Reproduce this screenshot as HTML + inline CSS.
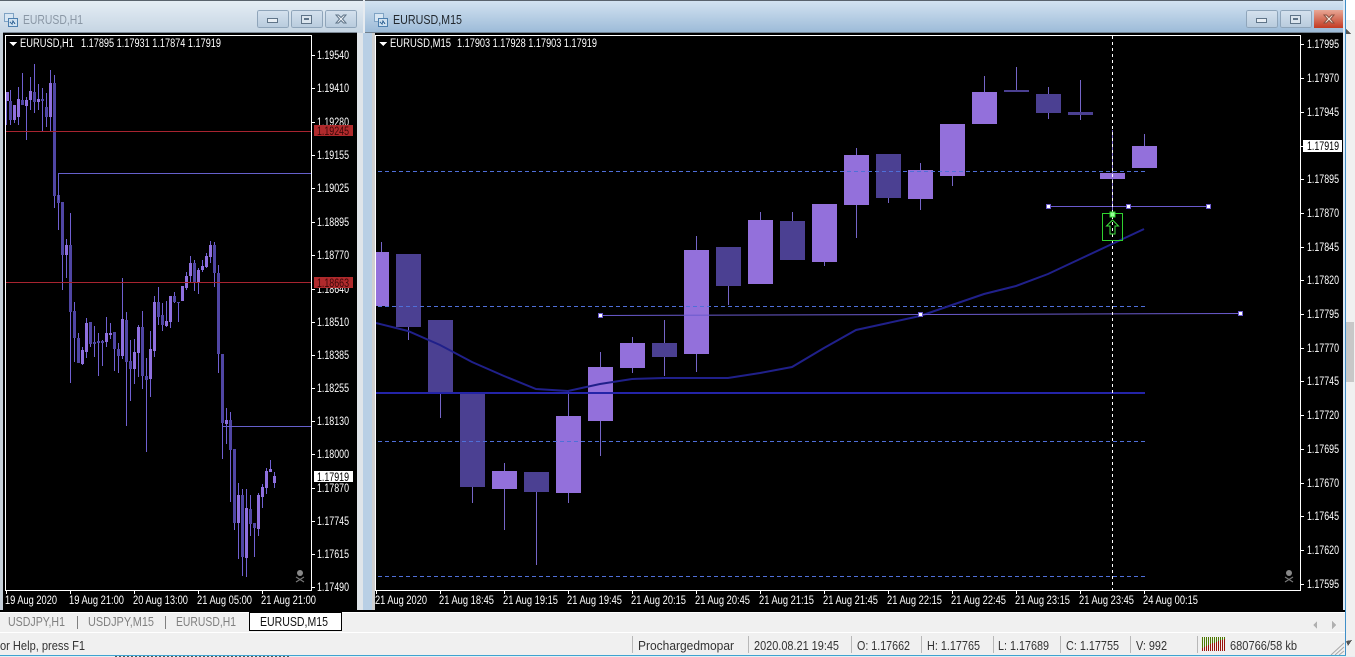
<!DOCTYPE html>
<html><head><meta charset="utf-8"><style>
html,body{margin:0;padding:0;background:#f0f0f0;width:1355px;height:657px;overflow:hidden}
svg{display:block;position:absolute;left:0;top:0}
text{font-family:"Liberation Sans",sans-serif;white-space:pre}
.p text,.t text{fill:#fff;font-size:11.5px}
.b text{fill:#333;font-size:13px}
</style></head><body>
<svg width="1355" height="657" viewBox="0 0 1355 657" xmlns="http://www.w3.org/2000/svg" shape-rendering="crispEdges">
<defs>
<linearGradient id="g1" x1="0" y1="0" x2="0" y2="1"><stop offset="0" stop-color="#e6eef5"/><stop offset="1" stop-color="#c6d5e3"/></linearGradient>
<linearGradient id="g2" x1="0" y1="0" x2="0" y2="1"><stop offset="0" stop-color="#d4e4f2"/><stop offset="1" stop-color="#9dbbd8"/></linearGradient>
<linearGradient id="bt" x1="0" y1="0" x2="0" y2="1"><stop offset="0" stop-color="#d5e2ee"/><stop offset="1" stop-color="#b8cbdd"/></linearGradient>
<linearGradient id="btr" x1="0" y1="0" x2="0" y2="1"><stop offset="0" stop-color="#e8a795"/><stop offset="1" stop-color="#c23a22"/></linearGradient>
</defs>
<rect width="1355" height="657" fill="#f0f0f0"/>
<rect x="1346" y="0" width="9" height="20" fill="#fff"/>
<rect x="1346" y="322" width="8" height="60" fill="#c8c8c8"/>

<!-- left window -->
<rect x="0" y="0" width="363" height="612" fill="#c8d5e2"/>
<rect x="0" y="0" width="363" height="32" fill="url(#g1)"/>
<rect x="0" y="0" width="363" height="1" fill="#59636d"/>
<rect x="3" y="32" width="354" height="1" fill="#7b8794"/>
<rect x="3" y="33" width="354" height="578" fill="#000"/>
<rect x="0" y="33" width="3" height="578" fill="#c5cfd9"/>
<rect x="357" y="33" width="6" height="578" fill="#e0e5ea"/>
<!-- icon -->
<g>
<rect x="4.5" y="13.5" width="9" height="8" fill="#d7e6f3" stroke="#7fa3c4"/>
<rect x="8.5" y="18.5" width="9" height="8" fill="#cfe1f0" stroke="#4d7fae"/>
<path d="M10 22l2 2 1-3 2 3" stroke="#3b6b9a" fill="none"/>
</g>
<text x="23" y="24" font-size="13" fill="#8a97a5" textLength="60" lengthAdjust="spacingAndGlyphs">EURUSD,H1</text>
<g stroke="#8fa5ba" fill="url(#bt)">
<rect x="257.5" y="10.5" width="31" height="17" rx="2"/>
<rect x="291.5" y="10.5" width="31" height="17" rx="2"/>
<rect x="325.5" y="10.5" width="31" height="17" rx="2"/>
</g>
<rect x="267.5" y="18.5" width="10" height="4" fill="#e8eef4" stroke="#5f7488"/>
<rect x="301.5" y="15.5" width="10" height="8" fill="#dbe5ee" stroke="#5f7488"/>
<rect x="304" y="18" width="5" height="2" fill="#5f7488"/>
<path d="M336 15l2.500 0 2.500 2.500 2.500-2.500 2.500 0-3.500 4 3.500 4-2.500 0-2.500-2.500-2.500 2.500-2.500 0 3.500-4z" fill="#eef2f6" stroke="#5f7488" shape-rendering="auto"/>

<!-- right window -->
<rect x="363" y="0" width="982" height="612" fill="#bcd0e4"/>
<rect x="363" y="0" width="2" height="33" fill="#e6ebf0"/>
<rect x="365" y="0" width="980" height="32" fill="url(#g2)"/>
<rect x="365" y="0" width="980" height="1" fill="#59636d"/>
<rect x="365" y="32" width="978" height="1" fill="#6f7f8e"/>
<rect x="375" y="33" width="968" height="578" fill="#000"/>
<rect x="363" y="33" width="9" height="578" fill="#b9cfe5"/>
<rect x="372" y="33" width="3" height="578" fill="#cfcfcf"/>
<rect x="1345" y="0" width="1" height="655" fill="#3f8fc8"/>
<rect x="1343" y="0" width="2" height="612" fill="#dfeaf5"/>
<g>
<rect x="374.5" y="13.5" width="9" height="8" fill="#d7e6f3" stroke="#7fa3c4"/>
<rect x="378.5" y="18.5" width="9" height="8" fill="#cfe1f0" stroke="#4d7fae"/>
<path d="M380 22l2 2 1-3 2 3" stroke="#3b6b9a" fill="none"/>
</g>
<text x="393" y="24" font-size="13" fill="#22282e" textLength="69" lengthAdjust="spacingAndGlyphs">EURUSD,M15</text>
<g stroke="#8fa5ba" fill="url(#bt)">
<rect x="1246.5" y="10.5" width="31" height="17" rx="2"/>
<rect x="1280.5" y="10.5" width="31" height="17" rx="2"/>
</g>
<rect x="1314" y="10" width="29" height="18" fill="url(#btr)"/>
<rect x="1256.5" y="18.5" width="10" height="4" fill="#e8eef4" stroke="#5f7488"/>
<rect x="1290.5" y="15.5" width="10" height="8" fill="#dbe5ee" stroke="#5f7488"/>
<rect x="1293" y="18" width="5" height="2" fill="#5f7488"/>
<path d="M1324 15l2.500 0 2.500 2.500 2.500-2.500 2.500 0-3.500 4 3.500 4-2.500 0-2.500-2.500-2.500 2.500-2.500 0 3.500-4z" fill="#f3e6dc" stroke="#8a5040" shape-rendering="auto"/>

<!-- H1 chart -->
<g fill="none">
<path stroke="#7060d2" d="M6.5 92V125M10.5 90V125M14.5 105V123M18.5 87V125M22.5 73V105M26.5 97V140M30.5 77V110M34.5 64V113M38.5 84V110M42.5 88V131M46.5 93V127M50.5 70V131M54.5 75V208M58.5 173V230M62.5 202V290M66.5 239V278M70.5 213V383M74.5 302V362M78.5 333V363M82.5 347V365M86.5 318V358M90.5 322V347M94.5 326V357M98.5 333V376M102.5 340V366M106.5 317V347M110.5 323V339M114.5 332V371M118.5 343V373M122.5 278V359M126.5 312V426M130.5 340V401M134.5 339V384M138.5 325V377M142.5 311V389M146.5 358V452M150.5 331V397M154.5 296V357M158.5 287V325M162.5 303V331M166.5 301V327M170.5 296V328M174.5 292V303M178.5 302V322M182.5 286V301M186.5 272V290M190.5 256V282M194.5 260V291M198.5 268V294M202.5 260V272M206.5 253V268M210.5 241V263M214.5 242V287M218.5 265V373M222.5 354V459M226.5 408V444M230.5 412V502M234.5 449V530M238.5 483V559M242.5 489V576M246.5 489V577M250.5 495V536M254.5 523V557M258.5 493V536M262.5 484V508M266.5 468V494M270.5 460V472M274.5 472V488"/>
<path stroke="#5046a4" stroke-width="3" d="M10.5 101V120M22.5 100V105M34.5 92V102M42.5 99V101M46.5 107V117M54.5 83V196M58.5 195V203M62.5 202V255M70.5 245V312M74.5 311V338M78.5 338V363M90.5 322V344M94.5 342V344M98.5 341V343M102.5 341V343M114.5 332V349M118.5 349V356M126.5 320V362M130.5 361V369M142.5 327V376M146.5 376V380M158.5 302V317M162.5 315V325M174.5 296V302M178.5 302V303M194.5 263V282M214.5 245V273M218.5 273V354M222.5 354V423M230.5 420V450M234.5 449V523M242.5 495V557M250.5 509V524M254.5 523V528"/>
<path stroke="#8f70de" stroke-width="3" d="M7.5 92V101M14.5 105V120M18.5 99V117M26.5 100V106M30.5 91V100M38.5 99V102M50.5 83V117M66.5 245V255M82.5 350V364M86.5 323V352M106.5 333V342M110.5 333V335M122.5 319V356M134.5 352V369M138.5 327V353M150.5 349V379M154.5 302V351M166.5 321V326M170.5 296V322M182.5 286V301M186.5 276V288M190.5 263V276M198.5 270V283M202.5 266V270M206.5 256V267M210.5 245V257M226.5 420V424M238.5 495V523M246.5 508V558M258.5 495V529M262.5 487V497M266.5 471V488M270.5 469V472M274.5 476V483"/>
<path stroke="#a82430" d="M6 131.5H312M6 282.5H312"/>
<path stroke="#6660cc" d="M58.5 173.5H312M58.5 173.5V200M222 426.5H312"/>
<rect x="5.5" y="35.5" width="306" height="555" stroke="#fff"/>
<path stroke="#fff" d="M312 55.5h3M312 88.5h3M312 122.5h3M312 155.5h3M312 188.5h3M312 222.5h3M312 255.5h3M312 289.5h3M312 322.5h3M312 355.5h3M312 388.5h3M312 421.5h3M312 454.5h3M312 488.5h3M312 521.5h3M312 554.5h3M312 587.5h3M6.5 591v3M70.5 591v3M134.5 591v3M198.5 591v3M262.5 591v3"/>
</g>
<path d="M9 42h8l-4 4z" fill="#fff"/>
<text x="20" y="47" fill="#fff" font-size="11.5" textLength="54" lengthAdjust="spacingAndGlyphs">EURUSD,H1</text>
<text x="81" y="47" fill="#fff" font-size="11.5" textLength="140" lengthAdjust="spacingAndGlyphs">1.17895 1.17931 1.17874 1.17919</text>
<g class="p">
<text x="317" y="59" textLength="32" lengthAdjust="spacingAndGlyphs">1.19540</text>
<text x="317" y="92" textLength="32" lengthAdjust="spacingAndGlyphs">1.19410</text>
<text x="317" y="126" textLength="32" lengthAdjust="spacingAndGlyphs">1.19280</text>
<text x="317" y="159" textLength="32" lengthAdjust="spacingAndGlyphs">1.19155</text>
<text x="317" y="192" textLength="32" lengthAdjust="spacingAndGlyphs">1.19025</text>
<text x="317" y="226" textLength="32" lengthAdjust="spacingAndGlyphs">1.18895</text>
<text x="317" y="259" textLength="32" lengthAdjust="spacingAndGlyphs">1.18770</text>
<text x="317" y="293" textLength="32" lengthAdjust="spacingAndGlyphs">1.18640</text>
<text x="317" y="326" textLength="32" lengthAdjust="spacingAndGlyphs">1.18510</text>
<text x="317" y="359" textLength="32" lengthAdjust="spacingAndGlyphs">1.18385</text>
<text x="317" y="392" textLength="32" lengthAdjust="spacingAndGlyphs">1.18255</text>
<text x="317" y="425" textLength="32" lengthAdjust="spacingAndGlyphs">1.18130</text>
<text x="317" y="458" textLength="32" lengthAdjust="spacingAndGlyphs">1.18000</text>
<text x="317" y="492" textLength="32" lengthAdjust="spacingAndGlyphs">1.17870</text>
<text x="317" y="525" textLength="32" lengthAdjust="spacingAndGlyphs">1.17745</text>
<text x="317" y="558" textLength="32" lengthAdjust="spacingAndGlyphs">1.17615</text>
<text x="317" y="591" textLength="32" lengthAdjust="spacingAndGlyphs">1.17490</text>
</g>
<rect x="314" y="125" width="39" height="11" fill="#b02a2c"/>
<text x="317" y="135" font-size="11.5" fill="#3a0808" textLength="32" lengthAdjust="spacingAndGlyphs">1.19245</text>
<rect x="314" y="277" width="39" height="11" fill="#b02a2c"/>
<text x="317" y="287" font-size="11.5" fill="#3a0808" textLength="32" lengthAdjust="spacingAndGlyphs">1.18663</text>
<rect x="314" y="471" width="39" height="11" fill="#fff"/>
<text x="317" y="481" font-size="11.5" fill="#000" textLength="32" lengthAdjust="spacingAndGlyphs">1.17919</text>
<g class="t">
<text x="5" y="604" textLength="52" lengthAdjust="spacingAndGlyphs">19 Aug 2020</text>
<text x="69" y="604" textLength="55" lengthAdjust="spacingAndGlyphs">19 Aug 21:00</text>
<text x="133" y="604" textLength="55" lengthAdjust="spacingAndGlyphs">20 Aug 13:00</text>
<text x="197" y="604" textLength="55" lengthAdjust="spacingAndGlyphs">21 Aug 05:00</text>
<text x="261" y="604" textLength="55" lengthAdjust="spacingAndGlyphs">21 Aug 21:00</text>
</g>
<g shape-rendering="auto" stroke="#777" fill="none">
<circle cx="300" cy="573" r="3" fill="#888" stroke="none"/>
<path d="M296 577l8 5M304 577l-8 5" stroke-width="1.2"/>
</g>

<!-- M15 chart -->
<g fill="none">
<path stroke="#7565c8" d="M381.5 242V252M408.5 254V340M440.5 320V418M472.5 393V503M504.5 463V530M536.5 472V565M568.5 390V503M600.5 352V456M632.5 337V373M664.5 320V376M696.5 236V372M728.5 247V305M760.5 212V283M792.5 212V260M824.5 204V266M856.5 148V238M888.5 154V203M920.5 163V210M952.5 124V186M984.5 76V124M1016.5 67V91M1048.5 87V119M1080.5 80V120M1112.5 130V213M1144.5 134V146"/>
<g stroke="none" fill="#4b4092">
<rect x="396" y="254" width="25" height="73"/>
<rect x="428" y="320" width="25" height="72"/>
<rect x="460" y="393" width="25" height="94"/>
<rect x="524" y="472" width="25" height="20"/>
<rect x="652" y="343" width="25" height="14"/>
<rect x="716" y="247" width="25" height="39"/>
<rect x="780" y="221" width="25" height="39"/>
<rect x="876" y="154" width="25" height="44"/>
<rect x="1004" y="90" width="25" height="2"/>
<rect x="1036" y="94" width="25" height="19"/>
<rect x="1068" y="112" width="25" height="3"/>
</g>
<g stroke="none" fill="#9370db">
<rect x="376" y="252" width="13" height="54"/>
<rect x="492" y="471" width="25" height="18"/>
<rect x="556" y="416" width="25" height="77"/>
<rect x="588" y="367" width="25" height="54"/>
<rect x="620" y="343" width="25" height="25"/>
<rect x="684" y="250" width="25" height="104"/>
<rect x="748" y="220" width="25" height="64"/>
<rect x="812" y="204" width="25" height="58"/>
<rect x="844" y="155" width="25" height="50"/>
<rect x="908" y="170" width="25" height="29"/>
<rect x="940" y="124" width="25" height="52"/>
<rect x="972" y="92" width="25" height="32"/>
<rect x="1100" y="173" width="25" height="6"/>
<rect x="1132" y="146" width="25" height="22"/>
</g>
<path stroke="#4f6fd8" stroke-dasharray="4 3" d="M378 171.5H1146M378 306.5H1146M378 441.5H1146M378 576.5H1146"/>
<path stroke="#2424a8" stroke-width="2" d="M376 393H1145"/>
<path stroke="#20208a" stroke-width="2" shape-rendering="auto" d="M376 323L408 331 440 345 472 362 504 376 536 389 568 391 600 384 632 379 664 378 696 378 728 378 760 373 792 367 824 348 856 330 888 323 920 316 952 305 984 294 1016 286 1048 274 1080 259 1112 244 1144 229"/>
<path stroke="#6a5acd" shape-rendering="auto" d="M600 315.5L1240 313.5"/>
<path stroke="#6a5acd" d="M1048 206.5H1208"/>
<path stroke="#fff" stroke-dasharray="3 3" d="M1112.5 36V590"/>
<rect x="1102.5" y="213.5" width="20" height="27" stroke="#2fd12f"/>
<path stroke="#3fe03f" shape-rendering="auto" d="M1112.5 220l-6 6h3.5v8h5v-8h3.5z"/>
<rect x="375.5" y="35.5" width="925" height="555" stroke="#fff"/>
<path stroke="#fff" d="M1301 44.5h3M1301 78.5h3M1301 112.5h3M1301 146.5h3M1301 179.5h3M1301 213.5h3M1301 247.5h3M1301 280.5h3M1301 314.5h3M1301 348.5h3M1301 381.5h3M1301 415.5h3M1301 449.5h3M1301 483.5h3M1301 516.5h3M1301 550.5h3M1301 584.5h3M376.5 591v3M440.5 591v3M504.5 591v3M568.5 591v3M632.5 591v3M696.5 591v3M760.5 591v3M824.5 591v3M888.5 591v3M952.5 591v3M1016.5 591v3M1080.5 591v3M1144.5 591v3"/>
</g>
<g fill="#fff" stroke="#6a5acd">
<rect x="598.5" y="313.5" width="4" height="4"/>
<rect x="918.5" y="312.5" width="4" height="4"/>
<rect x="1238.5" y="311.5" width="4" height="4"/>
<rect x="1046.5" y="204.5" width="4" height="4"/>
<rect x="1126.5" y="204.5" width="4" height="4"/>
<rect x="1206.5" y="204.5" width="4" height="4"/>
</g>
<rect x="1110" y="212" width="5" height="5" fill="#9f9" stroke="#2fd12f"/>
<path d="M379 42h8l-4 4z" fill="#fff"/>
<text x="390" y="47" fill="#fff" font-size="11.5" textLength="61" lengthAdjust="spacingAndGlyphs">EURUSD,M15</text>
<text x="457" y="47" fill="#fff" font-size="11.5" textLength="140" lengthAdjust="spacingAndGlyphs">1.17903 1.17928 1.17903 1.17919</text>
<g class="p">
<text x="1307" y="48" textLength="32" lengthAdjust="spacingAndGlyphs">1.17995</text>
<text x="1307" y="82" textLength="32" lengthAdjust="spacingAndGlyphs">1.17970</text>
<text x="1307" y="116" textLength="32" lengthAdjust="spacingAndGlyphs">1.17945</text>
<text x="1307" y="183" textLength="32" lengthAdjust="spacingAndGlyphs">1.17895</text>
<text x="1307" y="217" textLength="32" lengthAdjust="spacingAndGlyphs">1.17870</text>
<text x="1307" y="251" textLength="32" lengthAdjust="spacingAndGlyphs">1.17845</text>
<text x="1307" y="284" textLength="32" lengthAdjust="spacingAndGlyphs">1.17820</text>
<text x="1307" y="318" textLength="32" lengthAdjust="spacingAndGlyphs">1.17795</text>
<text x="1307" y="352" textLength="32" lengthAdjust="spacingAndGlyphs">1.17770</text>
<text x="1307" y="385" textLength="32" lengthAdjust="spacingAndGlyphs">1.17745</text>
<text x="1307" y="419" textLength="32" lengthAdjust="spacingAndGlyphs">1.17720</text>
<text x="1307" y="453" textLength="32" lengthAdjust="spacingAndGlyphs">1.17695</text>
<text x="1307" y="487" textLength="32" lengthAdjust="spacingAndGlyphs">1.17670</text>
<text x="1307" y="520" textLength="32" lengthAdjust="spacingAndGlyphs">1.17645</text>
<text x="1307" y="554" textLength="32" lengthAdjust="spacingAndGlyphs">1.17620</text>
<text x="1307" y="588" textLength="32" lengthAdjust="spacingAndGlyphs">1.17595</text>
</g>
<rect x="1303" y="140" width="39" height="12" fill="#fff"/>
<text x="1307" y="150" font-size="11.5" fill="#000" textLength="32" lengthAdjust="spacingAndGlyphs">1.17919</text>
<g class="t">
<text x="375" y="604" textLength="52" lengthAdjust="spacingAndGlyphs">21 Aug 2020</text>
<text x="439" y="604" textLength="55" lengthAdjust="spacingAndGlyphs">21 Aug 18:45</text>
<text x="503" y="604" textLength="55" lengthAdjust="spacingAndGlyphs">21 Aug 19:15</text>
<text x="567" y="604" textLength="55" lengthAdjust="spacingAndGlyphs">21 Aug 19:45</text>
<text x="631" y="604" textLength="55" lengthAdjust="spacingAndGlyphs">21 Aug 20:15</text>
<text x="695" y="604" textLength="55" lengthAdjust="spacingAndGlyphs">21 Aug 20:45</text>
<text x="759" y="604" textLength="55" lengthAdjust="spacingAndGlyphs">21 Aug 21:15</text>
<text x="823" y="604" textLength="55" lengthAdjust="spacingAndGlyphs">21 Aug 21:45</text>
<text x="887" y="604" textLength="55" lengthAdjust="spacingAndGlyphs">21 Aug 22:15</text>
<text x="951" y="604" textLength="55" lengthAdjust="spacingAndGlyphs">21 Aug 22:45</text>
<text x="1015" y="604" textLength="55" lengthAdjust="spacingAndGlyphs">21 Aug 23:15</text>
<text x="1079" y="604" textLength="55" lengthAdjust="spacingAndGlyphs">21 Aug 23:45</text>
<text x="1143" y="604" textLength="55" lengthAdjust="spacingAndGlyphs">24 Aug 00:15</text>
</g>
<g shape-rendering="auto" stroke="#777" fill="none">
<circle cx="1289" cy="573" r="3" fill="#888" stroke="none"/>
<path d="M1285 577l8 5M1293 577l-8 5" stroke-width="1.2"/>
</g>

<!-- tabs -->
<rect x="0" y="610" width="1345" height="2" fill="#000"/>
<rect x="0" y="612" width="1345" height="1" fill="#fff"/>
<rect x="249.500" y="611.500" width="92" height="19" fill="#fff" stroke="#000"/>
<rect x="250" y="611" width="91" height="2" fill="#000"/>
<g font-size="13">
<text x="8" y="626" fill="#808080" textLength="57" lengthAdjust="spacingAndGlyphs">USDJPY,H1</text>
<text x="88" y="626" fill="#808080" textLength="66" lengthAdjust="spacingAndGlyphs">USDJPY,M15</text>
<text x="176" y="626" fill="#808080" textLength="60" lengthAdjust="spacingAndGlyphs">EURUSD,H1</text>
<text x="260" y="626" fill="#111" textLength="68" lengthAdjust="spacingAndGlyphs">EURUSD,M15</text>
</g>
<path d="M77.500 616V629M165.500 616V629" stroke="#808080"/>
<path d="M1317 621l-4 4 4 4zM1332 621l4 4-4 4z" fill="#b0b0b0"/>

<!-- status -->
<rect x="0" y="632" width="1345" height="1" fill="#fff"/>
<path d="M632.500 636V653M748.500 636V653M851.500 636V653M921.500 636V653M993.500 636V653M1060.500 636V653M1130.500 636V653M1197.500 636V653" stroke="#b8b8b8"/>
<g class="b">
<text x="0" y="650" textLength="85" lengthAdjust="spacingAndGlyphs">or Help, press F1</text>
<text x="638" y="650" textLength="96" lengthAdjust="spacingAndGlyphs">Prochargedmopar</text>
<text x="754" y="650" textLength="85" lengthAdjust="spacingAndGlyphs">2020.08.21 19:45</text>
<text x="857" y="650" textLength="53" lengthAdjust="spacingAndGlyphs">O: 1.17662</text>
<text x="927" y="650" textLength="53" lengthAdjust="spacingAndGlyphs">H: 1.17765</text>
<text x="998" y="650" textLength="51" lengthAdjust="spacingAndGlyphs">L: 1.17689</text>
<text x="1066" y="650" textLength="53" lengthAdjust="spacingAndGlyphs">C: 1.17755</text>
<text x="1136" y="650" textLength="31" lengthAdjust="spacingAndGlyphs">V: 992</text>
<text x="1230" y="650" textLength="67" lengthAdjust="spacingAndGlyphs">680766/58 kb</text>
</g>
<path d="M1202.500 637v14M1204.500 637v14M1206.500 637v14M1208.500 637v14M1210.500 637v14M1212.500 637v14M1214.500 637v14M1216.500 637v14M1218.500 637v14M1220.500 637v14M1222.500 637v14M1224.500 637v14" stroke="#4c7800"/>
<path d="M1202.500 651v-3M1204.500 651v-4M1206.500 651v-5M1208.500 651v-6M1210.500 651v-7M1212.500 651v-8M1214.500 651v-8M1216.500 651v-9M1218.500 651v-10M1220.500 651v-11M1222.500 651v-11M1224.500 651v-12" stroke="#9a1008"/>
<path d="M1344 643l-13 12M1344 647l-9 8M1344 651l-5 4" stroke="#a8a8a8" shape-rendering="auto"/>
<rect x="0" y="655" width="1346" height="1" fill="#3fa3d0"/>
<rect x="0" y="656" width="1355" height="1" fill="#e8eef2"/>
<path d="M115 656.500H290" stroke="#555" stroke-dasharray="2 2"/>
<path d="M1346 641l6-1-4 6z" fill="#555"/>
<path d="M1346 29l5 5h-5z" fill="#555"/>
</svg>
</body></html>
